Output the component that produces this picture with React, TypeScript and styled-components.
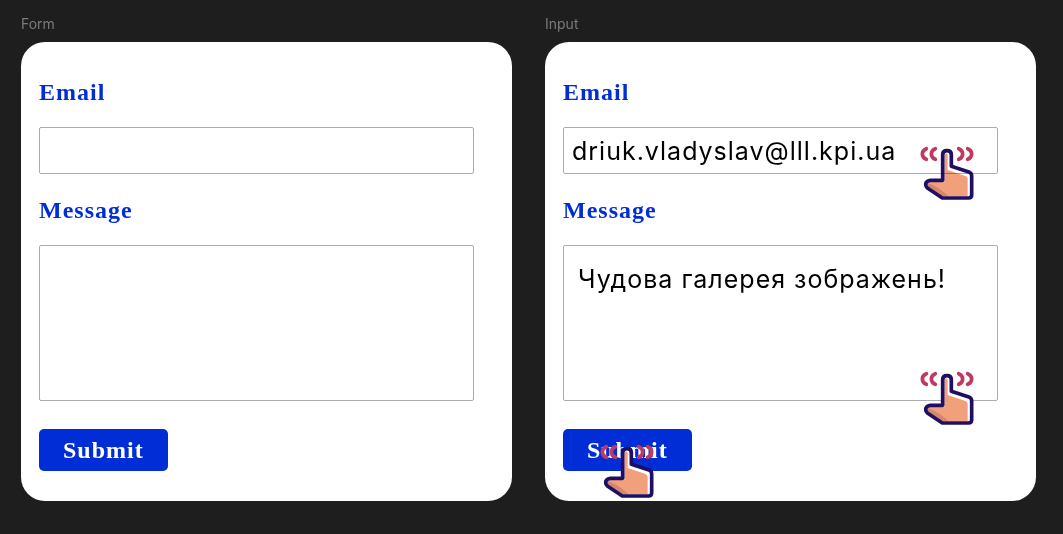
import React, { useId } from "react";
import styled, { createGlobalStyle } from "styled-components";

const GlobalStyle = createGlobalStyle`
  *, *::before, *::after { box-sizing: border-box; }
  html { background: #1e1e1e; }
  body { margin: 0; }
`;

const Board = styled.main`
  display: grid;
  grid-template-columns: repeat(2, minmax(0, 1fr));
  gap: 33px;
  padding: 14px 27px 32px 21px;
`;

const Frame = styled.section`
  display: flex;
  flex-direction: column;
`;

const FrameName = styled.h2`
  margin: 0;
  padding-bottom: 8px;
  font: 400 14px/20px Inter, sans-serif;
  color: #7a7a7a;
`;

const Card = styled.form`
  display: flex;
  flex-direction: column;
  align-items: flex-start;
  padding: 34px 38px 30px 18px;
  border-radius: 24px;
  background: #fff;
`;

const Label = styled.label`
  font: 700 24px/32px "Liberation Serif", serif;
  letter-spacing: 1px;
  color: #002dd6;
`;

const Slot = styled.div<{ $fill?: boolean }>`
  position: relative;
  display: flex;
  width: ${({ $fill }) => ($fill ? "100%" : "auto")};
`;

const Field = styled(Slot)`
  margin: 19px 0 20px;
`;

const TextInput = styled.input`
  width: 100%;
  height: 47px;
  padding: 0 8px;
  border: 1px solid #acacac;
  border-radius: 2px;
  outline: none;
  background: #fff;
  font: 400 25px/32px Inter, sans-serif;
  letter-spacing: 1px;
  color: #000;
`;

const TextBox = styled(TextInput).attrs({ as: "textarea" })`
  height: 156px;
  padding: 17px 14px;
  resize: none;
  overflow: hidden;
`;

const Submit = styled.button`
  margin-top: 8px;
  padding: 5px 24px;
  border: 0;
  border-radius: 5px;
  background: #002dd6;
  font: 700 24px/32px "Liberation Serif", serif;
  letter-spacing: 1px;
  color: #fff;
`;

const Pointer = styled.svg<{ $right: number; $bottom: number; $blend?: boolean }>`
  position: absolute;
  right: ${({ $right }) => $right}px;
  bottom: ${({ $bottom }) => $bottom}px;
  width: 54px;
  height: 54px;
  z-index: 1;
  mix-blend-mode: ${({ $blend }) => ($blend ? "multiply" : "normal")};
  pointer-events: none;
`;

function Tap({ right, bottom, blend }: { right: number; bottom: number; blend?: boolean }) {
  return (
    <Pointer $right={right} $bottom={bottom} $blend={blend} viewBox="60 78 162 162" aria-hidden="true">
      <path d="M128 181V104Q128 92 141 92Q154 92 154 104V139L209 157Q215 160 215 168V225Q215 234 206 234H127L82 204Q75 197 78 189Q81 182 91 181Z" fill="#fff" />
      <path d="M133 186V106Q133 100 138 100Q143 100 143 107V150L194 167Q203 170 203 178V229H128L86 201Q80 196 83 190Q85 186 91 186Z" fill="#f2a07b" />
      <path d="M82 190Q104 194 128 214Q136 220 145 229H128L84 200Z" fill="#d3876c" />
      <path d="M128 181V104Q128 92 141 92Q154 92 154 104V139L209 157Q215 160 215 168V225Q215 234 206 234H127L82 204Q75 197 78 189Q81 182 91 181Z" fill="none" stroke="#200e62" strokeWidth="11" strokeLinejoin="round" />
      <g fill="none" stroke="#c03a5f" strokeWidth="11" strokeLinecap="round">
        <path d="M79 86C63 92 63 112 79 118M106 86C90 92 90 112 106 118M176 86C192 92 192 112 176 118M203 86C219 92 219 112 203 118" />
      </g>
    </Pointer>
  );
}

interface FormFrameProps {
  name: string;
  email?: string;
  message?: string;
  taps?: boolean;
}

function FormFrame({ name, email = "", message = "", taps = false }: FormFrameProps) {
  const id = useId();
  return (
    <Frame>
      <FrameName>{name}</FrameName>
      <Card onSubmit={(e) => e.preventDefault()}>
        <Label htmlFor={`${id}-email`}>Email</Label>
        <Field $fill>
          <TextInput id={`${id}-email`} type="text" inputMode="email" defaultValue={email} spellCheck={false} />
          {taps && <Tap right={24} bottom={-26} blend />}
        </Field>
        <Label htmlFor={`${id}-message`}>Message</Label>
        <Field $fill>
          <TextBox id={`${id}-message`} defaultValue={message} spellCheck={false} />
          {taps && <Tap right={24} bottom={-24} />}
        </Field>
        <Slot>
          <Submit type="submit">Submit</Submit>
          {taps && <Tap right={38} bottom={-27} />}
        </Slot>
      </Card>
    </Frame>
  );
}

export default function App() {
  return (
    <>
      <GlobalStyle />
      <Board>
        <FormFrame name="Form" />
        <FormFrame name="Input" email="driuk.vladyslav@lll.kpi.ua" message="Чудова галерея зображень!" taps />
      </Board>
    </>
  );
}
